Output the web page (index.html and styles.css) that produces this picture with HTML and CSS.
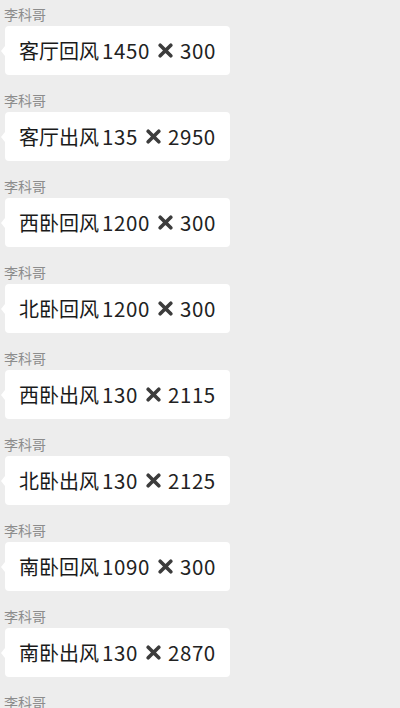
FILE: index.html
```html
<!DOCTYPE html>
<html lang="zh">

<head>
  <meta charset="UTF-8">
  <meta name="viewport" content="width=device-width, initial-scale=1.0">
  <title>聊天记录</title>
  <link rel="stylesheet" href="styles.css">
</head>

<body>
  <div class="chat" id="chat"></div>

  <script>
    const messages = [
      ['客厅回风', '1450', '300'],
      ['客厅出风', '135', '2950'],
      ['西卧回风', '1200', '300'],
      ['北卧回风', '1200', '300'],
      ['西卧出风', '130', '2115'],
      ['北卧出风', '130', '2125'],
      ['南卧回风', '1090', '300'],
      ['南卧出风', '130', '2870'],
      ['', '', '']
    ];

    const cross = '<svg class="cross" viewBox="0 0 15 15"><path d="M2.2 2.2 12.8 12.8M12.8 2.2 2.2 12.8" stroke="#3c3c3c" stroke-width="3.6" stroke-linecap="round"/></svg>';

    const chat = document.getElementById('chat');
    messages.forEach(function (m) {
      const item = document.createElement('div');
      item.className = 'msg';
      let html = '<div class="name">李科哥</div>';
      if (m[0]) {
        html += '<div class="bubble">' + m[0] + '<span class="num first">' + m[1] + '</span>' + cross + '<span class="num">' + m[2] + '</span></div>';
      }
      item.innerHTML = html;
      chat.appendChild(item);
    });
  </script>
</body>

</html>
```

FILE: styles.css
```css
body {
  margin: 0;
  background-color: #ededed;
  font-family: "Noto Sans CJK SC", "Noto Sans", sans-serif;
  color: #1a1a1a;
  overflow: hidden;
}

.chat {
  padding-top: 3px;
}

.msg {
  display: flex;
  flex-direction: column;
  align-items: flex-start;
  margin-bottom: 14px;
}

.name {
  font-size: 14px;
  line-height: 22px;
  color: #8c8c8c;
  padding-left: 4px;
  margin-bottom: 1px;
}

.bubble {
  position: relative;
  margin-left: 5px;
  background: #fff;
  border-radius: 4px;
  padding: 10px 14px 10px 14px;
  font-size: 20px;
  line-height: 29px;
  display: flex;
  align-items: center;
}

/* little tail on the left */
.bubble::before {
  content: "";
  position: absolute;
  left: -4px;
  top: 50%;
  margin-top: -5px;
  border-style: solid;
  border-width: 5px 4px 5px 0;
  border-color: transparent #fff transparent transparent;
}

.num {
  color: #222;
  font-size: 20.5px;
  letter-spacing: 0.6px;
}

.num.first {
  margin-left: 3px;
}

.cross {
  width: 15px;
  height: 15px;
  margin: 0 7px 0 8px;
}
```
